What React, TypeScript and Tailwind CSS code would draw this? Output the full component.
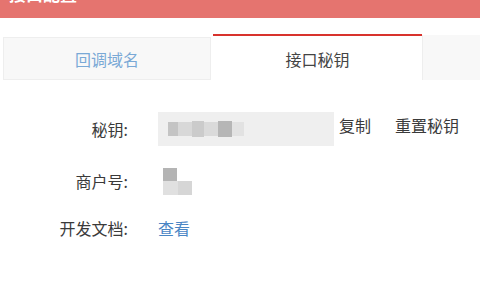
import React from "react";

const font = { fontFamily: '"Noto Sans CJK SC", "Noto Sans", sans-serif' };

export default function App() {
  return (
    <div className="h-[300px] w-[480px] overflow-hidden bg-white text-[#3a3a3a]" style={font}>
      {/* Header bar (title is cut off at the top) */}
      <div className="h-[18px] overflow-hidden bg-[#e5746f]">
        <div className="-mt-[18px] pl-[9px] text-[17px] font-bold leading-[24px] text-white">接口配置</div>
      </div>

      {/* Tabs */}
      <div className="mt-[16px] flex h-[46px] items-end">
        <div className="ml-[3px] flex h-[43px] w-[208px] items-center justify-center border border-[#eeeeee] bg-[#f8f8f8] text-[16px] text-[#7aa9d6]">
          回调域名
        </div>
        <div className="ml-[2px] flex h-[46px] w-[209px] items-center justify-center border-t-[2px] border-[#d8332d] bg-white pt-[2px] text-[16px] text-[#444]">
          接口秘钥
        </div>
        <div className="h-[45px] flex-1 border-l border-[#eeeeee] bg-[#f8f8f8]" />
      </div>

      {/* Content */}
      <div className="mt-[32px] flex flex-col text-[16px]">
        <div className="flex h-[34px] items-center">
          <div className="w-[129px] pr-[1px] text-right">秘钥:</div>
          <div className="ml-[29px] flex h-[34px] w-[176px] items-center bg-[#efefef] pl-[10px]">
            <div className="flex h-[16px] items-center">
              <span className="h-[14px] w-[10px] bg-[#c4c4c4]" />
              <span className="h-[14px] w-[14px] bg-[#d8d8d8]" />
              <span className="h-[16px] w-[12px] bg-[#cbcbcb]" />
              <span className="h-[14px] w-[14px] bg-[#dadada]" />
              <span className="h-[16px] w-[14px] bg-[#b6b6b6]" />
              <span className="h-[14px] w-[12px] bg-[#e2e2e2]" />
            </div>
          </div>
          <div className="ml-[5px] -mt-[8px]">复制</div>
          <div className="ml-[24px] -mt-[8px]">重置秘钥</div>
        </div>

        <div className="mt-[20px] flex h-[30px] items-center">
          <div className="w-[129px] pr-[1px] text-right">商户号:</div>
          <div className="ml-[34px] flex flex-col">
            <span className="h-[13px] w-[14px] bg-[#b4b4b4]" />
            <div className="flex">
              <span className="h-[14px] w-[15px] bg-[#e0e0e0]" />
              <span className="h-[14px] w-[14px] bg-[#d6d6d6]" />
            </div>
          </div>
        </div>

        <div className="mt-[20px] flex h-[24px] items-center">
          <div className="w-[129px] pr-[1px] text-right">开发文档:</div>
          <div className="ml-[29px] text-[#4a86c5]">查看</div>
        </div>
      </div>
    </div>
  );
}
